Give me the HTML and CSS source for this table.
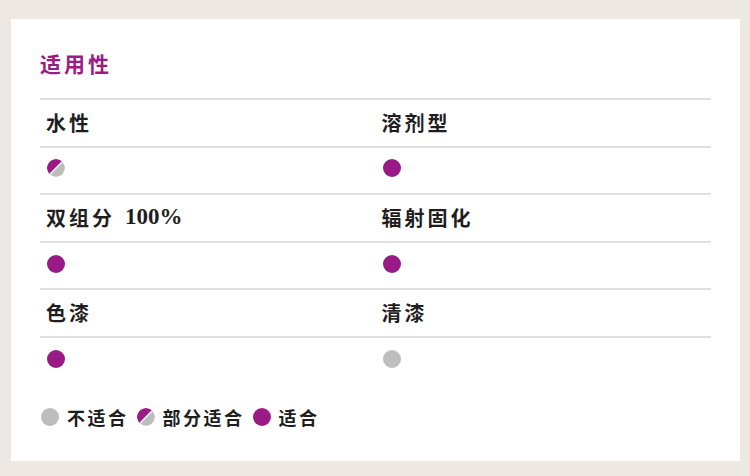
FILE: index.html
```html
<!DOCTYPE html>
<html lang="zh">
<head>
<meta charset="utf-8">
<link rel="stylesheet" href="styles.css">
</head>
<body>
<div class="card">
  <h2 class="title">适用性</h2>
  <div class="grid">
    <div class="cell head">水性</div>
    <div class="cell head">溶剂型</div>
    <div class="cell dots"><svg class="dot" viewBox="0 0 18 18"><circle cx="9" cy="9" r="9" fill="#bdbdbd"/><path d="M2.6 15.4A9 9 0 0 1 15.4 2.6Z" fill="#9b1b86"/><path d="M2.6 15.4L15.4 2.6" stroke="#fff" stroke-width="1.4"/></svg></div>
    <div class="cell dots"><span class="dot full"></span></div>
    <div class="cell head">双组分 <span class="num">100%</span></div>
    <div class="cell head">辐射固化</div>
    <div class="cell dots"><span class="dot full"></span></div>
    <div class="cell dots"><span class="dot full"></span></div>
    <div class="cell head">色漆</div>
    <div class="cell head">清漆</div>
    <div class="cell dots"><span class="dot full"></span></div>
    <div class="cell dots"><span class="dot none"></span></div>
  </div>
  <div class="legend">
    <span class="dot none"></span><span class="lbl">不适合</span>
    <svg class="dot" viewBox="0 0 18 18"><circle cx="9" cy="9" r="9" fill="#bdbdbd"/><path d="M2.6 15.4A9 9 0 0 1 15.4 2.6Z" fill="#9b1b86"/><path d="M2.6 15.4L15.4 2.6" stroke="#fff" stroke-width="1.4"/></svg><span class="lbl">部分适合</span>
    <span class="dot full"></span><span class="lbl">适合</span>
  </div>
</div>
</body>
</html>
```

FILE: styles.css
```css
html, body {
  margin: 0;
  padding: 0;
}
body {
  background: #ede8e2;
  width: 750px;
  height: 476px;
  overflow: hidden;
  font-family: "Liberation Serif", "Noto Sans CJK SC", serif;
}
.card {
  box-sizing: border-box;
  margin: 19px 0 0 11px;
  width: 729px;
  height: 442px;
  background: #fff;
  padding: 31px 29px 0 29px;
}
.title {
  margin: 0 0 22px 0;
  font-family: "Noto Sans CJK SC", sans-serif;
  font-size: 21px;
  line-height: 26px;
  font-weight: 700;
  letter-spacing: 3px;
  color: #9b1b86;
  padding-left: 0;
}
.grid {
  display: grid;
  grid-template-columns: 1fr 1fr;
}
.cell {
  box-sizing: border-box;
  height: 47.6px;
  border-top: 2px solid #e0e0e2;
  display: flex;
  align-items: center;
  padding-left: 6px;
  padding-bottom: 1px;
}
.dots {
  padding-left: 7px;
  padding-bottom: 4px;
}
.head {
  font-size: 20px;
  font-weight: 700;
  letter-spacing: 3px;
  color: #1e1e1e;
  white-space: pre;
}
.num {
  font-family: "Liberation Serif", serif;
  font-size: 23px;
  letter-spacing: 0;
  font-weight: 700;
  margin-left: 2px;
}
.dot {
  display: inline-block;
  width: 18px;
  height: 18px;
  border-radius: 50%;
  flex: none;
}
.full { background: #9b1b86; }
.none { background: #bdbdbd; }
.legend {
  margin-top: 22px;
  display: flex;
  align-items: center;
  height: 22px;
  padding-left: 1px;
}
.lbl {
  font-family: "Noto Sans CJK SC", sans-serif;
  font-size: 18px;
  font-weight: 700;
  letter-spacing: 2.5px;
  color: #1e1e1e;
  margin: 0 8px 0 8px;
}
```
